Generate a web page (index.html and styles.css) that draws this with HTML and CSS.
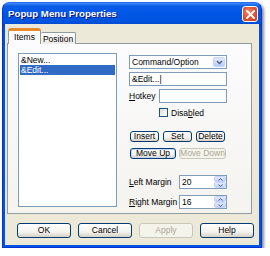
FILE: index.html
```html
<!DOCTYPE html>
<html>
<head>
<meta charset="utf-8">
<link rel="stylesheet" href="styles.css">
</head>
<body>
<div class="window">
  <div class="titlebar">
    <span class="title">Popup Menu Properties</span>
    <span class="close"><svg width="9" height="9" viewBox="0 0 9 9"><path d="M1 1L8 8M8 1L1 8" stroke="#fff" stroke-width="1.8" stroke-linecap="square"/></svg></span>
  </div>
  <div class="client">
    <div class="tabs">
      <div class="tab active">Items</div>
      <div class="tab">Position</div>
    </div>
    <div class="panel">
      <div class="listbox">
        <div class="item">&amp;New...</div>
        <div class="item sel">&amp;Edit...</div>
      </div>
      <div class="side">
        <div class="combo"><span class="combo-text">Command/Option</span><span class="drop"><svg width="7" height="5" viewBox="0 0 7 5"><path d="M1 1L3.5 3.5L6 1" stroke="#4D6185" stroke-width="1.5" fill="none"/></svg></span></div>
        <div class="field edit">&amp;Edit...|</div>
        <div class="row hot"><span class="lbl"><u>H</u>otkey</span><span class="field hk"></span></div>
        <div class="row chk"><span class="box"></span><span>Disa<u>b</u>led</span></div>
        <div class="btnrow r1">
          <span class="btn w29">Insert</span>
          <span class="btn w29">Set</span>
          <span class="btn w29">Delete</span>
        </div>
        <div class="btnrow r2">
          <span class="btn w46 def">Move Up</span>
          <span class="btn w47 dis">Move Down</span>
        </div>
        <div class="row spinrow first"><span class="lbl2"><u>L</u>eft Margin</span><span class="field spin"><span class="val">20</span><span class="arrows"><span class="ar"><svg width="5" height="3" viewBox="0 0 5 3"><path d="M0.5 2.5L2.5 0.5L4.5 2.5" stroke="#4D6185" stroke-width="1" fill="none"/></svg></span><span class="ar"><svg width="5" height="3" viewBox="0 0 5 3"><path d="M0.5 0.5L2.5 2.5L4.5 0.5" stroke="#4D6185" stroke-width="1" fill="none"/></svg></span></span></span></div>
        <div class="row spinrow"><span class="lbl2"><u>R</u>ight Margin</span><span class="field spin"><span class="val">16</span><span class="arrows"><span class="ar"><svg width="5" height="3" viewBox="0 0 5 3"><path d="M0.5 2.5L2.5 0.5L4.5 2.5" stroke="#4D6185" stroke-width="1" fill="none"/></svg></span><span class="ar"><svg width="5" height="3" viewBox="0 0 5 3"><path d="M0.5 0.5L2.5 2.5L4.5 0.5" stroke="#4D6185" stroke-width="1" fill="none"/></svg></span></span></span></div>
      </div>
    </div>
    <div class="footer">
      <span class="btn big">OK</span>
      <span class="btn big">Cancel</span>
      <span class="btn big dis">Apply</span>
      <span class="btn big">Help</span>
    </div>
  </div>
</div>
</body>
</html>
```

FILE: styles.css
```css
html, body {
  margin: 0;
  padding: 0;
  background: #ffffff;
}
body {
  font-family: "Liberation Sans", Arial, sans-serif;
  font-size: 8.5px;
  color: #000;
  white-space: nowrap;
}
.window {
  margin: 2px 0 0 2px;
  width: 260px;
  height: 246px;
  box-sizing: border-box;
  border-radius: 7px 7px 0 0;
  background: linear-gradient(to bottom, #3E8DF7 0px, #0B5DE8 3px, #0056E6 10px, #0053DD 19px, #0046C8 22px, #0050DA 24px, #0055E5 100%);
  border: 1px solid #0831D9;
  border-top-color: #2A6CF0;
  padding: 0 2px 2px 2px;
  display: flex;
  flex-direction: column;
  box-shadow: 2px 2px 3px rgba(0,0,0,0.45);
}
.titlebar {
  height: 21px;
  display: flex;
  align-items: center;
  justify-content: space-between;
  padding: 0 1px 0 3px;
}
.title {
  color: #fff;
  font-weight: bold;
  font-size: 9.7px;
  text-shadow: 1px 1px 0 #0A1883;
}
.close {
  width: 16px;
  height: 16px;
  box-sizing: border-box;
  border: 1px solid #fff;
  border-radius: 3px;
  background: radial-gradient(circle at 40% 35%, #EF8A6A 0%, #E0583A 45%, #C43A1E 100%);
  display: flex;
  align-items: center;
  justify-content: center;
  margin-top: 1px;
}
.client {
  flex: 1;
  background: #ECE9D8;
  padding: 4px 4px 0 2px;
  display: flex;
  flex-direction: column;
}
.tabs {
  display: flex;
  align-items: flex-end;
  height: 16px;
  padding-left: 1px;
  position: relative;
  z-index: 2;
  margin-bottom: -1px;
}
.tab {
  box-sizing: border-box;
  height: 12px;
  width: 35px;
  border: 1px solid #919B9C;
  border-bottom: none;
  border-radius: 2px 2px 0 0;
  background: linear-gradient(#FFFFFF, #ECEBE6);
  display: flex;
  align-items: center;
  justify-content: center;
  padding-top: 1px;
}
.tab.active {
  height: 16px;
  width: 33px;
  background: #FCFCFE;
  border-top: 3px solid #E68B2C;
  border-radius: 3px 3px 0 0;
  padding-top: 0;
  padding-bottom: 1px;
}
.tab.active + .tab {
  border-left: none;
}
.panel {
  box-sizing: border-box;
  height: 171px;
  width: 245px;
  border: 1px solid #919B9C;
  background: linear-gradient(#FCFCFE, #F4F3EE);
  padding: 9px 0 0 10px;
  display: flex;
  position: relative;
  z-index: 1;
}
.listbox {
  box-sizing: border-box;
  width: 99px;
  height: 154px;
  border: 1px solid #7F9DB9;
  background: #fff;
  padding: 1px 1px 0 1px;
}
.item {
  height: 10px;
  line-height: 10px;
  padding-left: 1px;
}
.item.sel {
  background: #316AC5;
  color: #fff;
}
.side {
  margin-left: 12px;
  width: 98px;
  padding-top: 2px;
  display: flex;
  flex-direction: column;
}
.combo {
  box-sizing: border-box;
  height: 14px;
  border: 1px solid #7F9DB9;
  background: #fff;
  display: flex;
  align-items: center;
  justify-content: space-between;
  padding: 0 1px 0 2px;
}
.drop {
  width: 12px;
  height: 10px;
  border-radius: 2px;
  background: linear-gradient(#E2EBFD, #B9CDF7);
  border: 1px solid #C3D3FD;
  box-sizing: border-box;
  display: flex;
  align-items: center;
  justify-content: center;
}
.field {
  box-sizing: border-box;
  border: 1px solid #7F9DB9;
  background: #fff;
  height: 14px;
  display: flex;
  align-items: center;
  padding-left: 2px;
}
.edit {
  margin-top: 3px;
}
.row {
  display: flex;
  align-items: center;
}
.hot {
  margin-top: 3px;
}
.lbl {
  width: 30px;
  flex: none;
}
.hk {
  flex: 1;
}
.chk {
  margin-top: 5px;
  padding-left: 30px;
  height: 9px;
}
.box {
  box-sizing: border-box;
  width: 9px;
  height: 9px;
  border: 1px solid #1C5180;
  background: linear-gradient(135deg, #DCDCD7, #FFFFFF);
  margin-right: 3px;
}
.btnrow {
  display: flex;
  gap: 4px;
  padding-left: 1px;
}
.r1 {
  margin-top: 14px;
}
.r2 {
  margin-top: 6px;
  gap: 3px;
}
.btn {
  box-sizing: border-box;
  height: 11px;
  border: 1px solid #003C74;
  border-radius: 3px;
  background: linear-gradient(#FFFFFF 0%, #F4F3EE 60%, #D6D0C5 100%);
  display: flex;
  align-items: center;
  justify-content: center;
  line-height: 1;
  overflow: hidden;
}
.w29 { width: 29px; }
.w46 { width: 46px; }
.w47 { width: 47px; }
.btn.def {
  box-shadow: inset 0 0 0 1px #C2D8F8;
}
.btn.dis {
  border-color: #C9C7BA;
  color: #ACA899;
  background: #F5F4EA;
}
.spinrow {
  height: 14px;
}
.spinrow.first {
  margin-top: 16px;
}
.spinrow + .spinrow {
  margin-top: 6px;
}
.lbl2 {
  width: 50px;
  flex: none;
}
.spin {
  flex: 1;
  justify-content: space-between;
  padding-right: 0;
}
.arrows {
  width: 12px;
  height: 12px;
  display: flex;
  flex-direction: column;
}
.ar {
  flex: 1;
  box-sizing: border-box;
  border: 1px solid #C3D3FD;
  border-radius: 2px;
  background: linear-gradient(#E2EBFD, #BCCFF8);
  display: flex;
  align-items: center;
  justify-content: center;
}
.footer {
  display: flex;
  gap: 7px;
  padding: 9px 0 0 10px;
}
.btn.big {
  width: 54px;
  height: 15px;
}
```
